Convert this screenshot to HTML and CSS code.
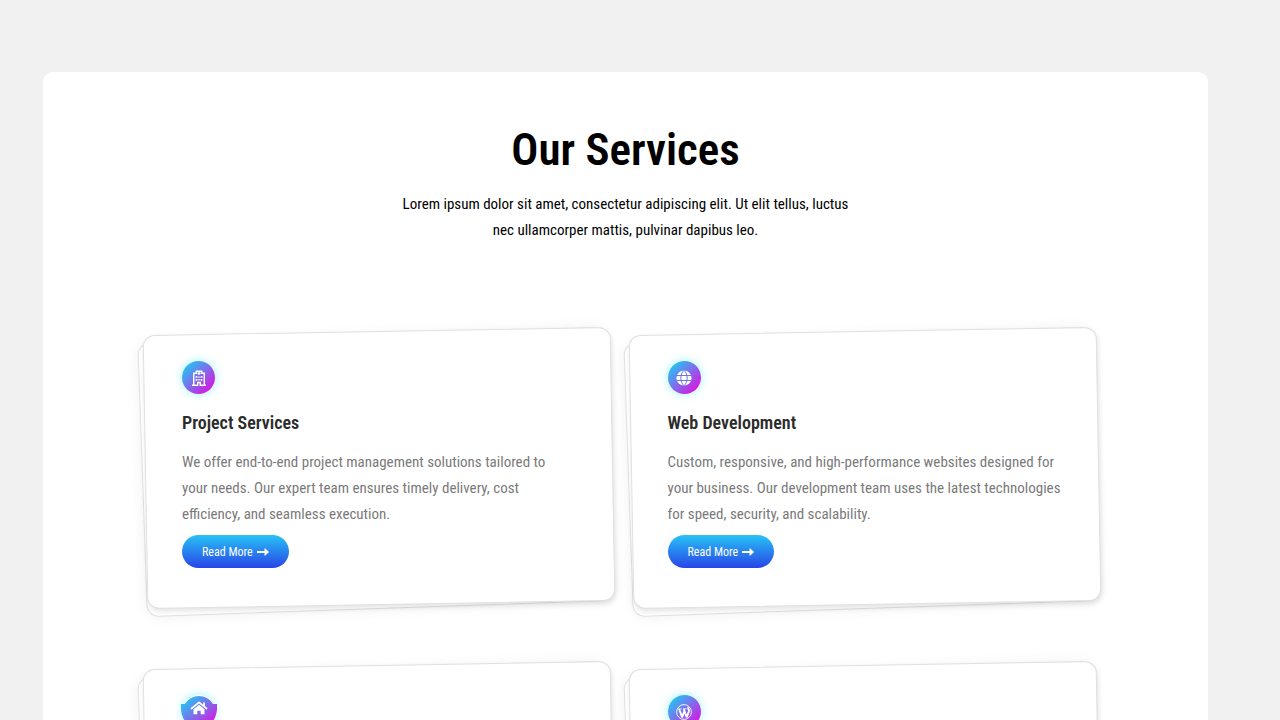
FILE: index.html
```html
<!DOCTYPE html>
<html lang="en">
<head>
  <meta charset="UTF-8">
  <meta name="viewport" content="width=device-width, initial-scale=1.0">
  <title>Our Services</title>
  <link rel="stylesheet" href="styles.css">
</head>
<body>
  <section class="services">
    <header class="section-header">
      <h1>Our Services</h1>
      <p>Lorem ipsum dolor sit amet, consectetur adipiscing elit. Ut elit tellus, luctus<br>nec ullamcorper mattis, pulvinar dapibus leo.</p>
    </header>

    <div class="services-grid">
      <!-- Project Services -->
      <article class="card">
        <div class="card-icon">
          <svg class="icon" viewBox="0 0 16 16" aria-hidden="true">
            <path fill="none" stroke="#fff" stroke-width="1.4" d="M2.7 15V3.3h2.6V1.2h5.4v2.1h2.6V15M1 15.2h5.7v-2.7h2.6v2.7H15"/>
            <path fill="#fff" d="M7.4 1.7h1.2v1h1v1.2h-1v1H7.4v-1h-1V2.7h1zM4.6 6h1.8v1.8H4.6zM9.6 6h1.8v1.8H9.6zM4.6 9h1.8v1.8H4.6zM9.6 9h1.8v1.8H9.6zM7.3 6.6h1.4v1.2H7.3zM7.3 9h1.4v1.6H7.3z"/>
          </svg>
        </div>
        <h2>Project Services</h2>
        <p>We offer end-to-end project management solutions tailored to<br>your needs. Our expert team ensures timely delivery, cost<br>efficiency, and seamless execution.</p>
        <a class="read-more" href="#">Read More
          <svg class="arrow" viewBox="0 0 12 8" aria-hidden="true"><path fill="#fff" d="M0 3h7.5V.8Q7.5 0 8.2.6L11.6 3.5Q12 4 11.6 4.5L8.2 7.4Q7.5 8 7.5 7.2V5H0z"/></svg>
        </a>
      </article>

      <!-- Web Development -->
      <article class="card">
        <div class="card-icon">
          <svg class="icon" viewBox="0 0 16 16" aria-hidden="true">
            <circle cx="8" cy="8" r="7.6" fill="#fff"/>
            <path fill="none" stroke="#6c7ae6" stroke-width="1" d="M.5 5.5h15M.5 10.5h15M8 .4C3.8 3.5 3.8 12.5 8 15.6M8 .4c4.2 3.1 4.2 12.1 0 15.2"/>
          </svg>
        </div>
        <h2>Web Development</h2>
        <p>Custom, responsive, and high-performance websites designed for<br>your business. Our development team uses the latest technologies<br>for speed, security, and scalability.</p>
        <a class="read-more" href="#">Read More
          <svg class="arrow" viewBox="0 0 12 8" aria-hidden="true"><path fill="#fff" d="M0 3h7.5V.8Q7.5 0 8.2.6L11.6 3.5Q12 4 11.6 4.5L8.2 7.4Q7.5 8 7.5 7.2V5H0z"/></svg>
        </a>
      </article>

      <!-- Home -->
      <article class="card">
        <div class="card-icon card-icon-home">
          <svg class="icon-badge" viewBox="0 0 36 33" aria-hidden="true">
            <defs>
              <linearGradient id="badge" x1="0" y1="0" x2="1" y2="1">
                <stop offset="0.1" stop-color="#1fc8f4"/>
                <stop offset="0.9" stop-color="#e010e0"/>
              </linearGradient>
            </defs>
            <path fill="url(#badge)" d="M4 9C10-1.7 26-1.7 32 9h4C37 24 29 33 18 33S-1 24 0 9z"/>
            <path fill="none" stroke="#fff" stroke-width="1.7" stroke-linecap="round" stroke-linejoin="round" d="M10.5 13.5L18 7.4l7.5 6.1M23 8v3"/>
            <path fill="#fff" d="M12.5 14.3L18 9.8l5.5 4.5v5h-3.8v-3.6h-3.4v3.6h-3.8z"/>
          </svg>
        </div>
      </article>

      <!-- WordPress -->
      <article class="card">
        <div class="card-icon">
          <svg class="icon" viewBox="0 0 16 16" aria-hidden="true">
            <circle cx="8" cy="8" r="7.4" fill="none" stroke="#fff" stroke-width="0.9"/>
            <path fill="none" stroke="#fff" stroke-width="0.8" d="M1.8 4.8h3.8M6.9 4.8h3.8"/>
            <path fill="none" stroke="#fff" stroke-width="1.9" stroke-linejoin="bevel" d="M3.1 5l3 8.3L8.4 7M7.7 5l3 8.3 2.2-6.1c.7-2-1.4-2.3-.7-4.1"/>
          </svg>
        </div>
      </article>
    </div>
  </section>
</body>
</html>
```
FILE: styles.css
```css
* {
  box-sizing: border-box;
}

body {
  font-family: 'Saira Extra Condensed', 'Roboto Condensed', 'Liberation Sans Narrow', 'Liberation Sans', sans-serif;
  margin: 0;
  background-color: #f1f1f1;
  color: #000;
  height: 100vh;
  overflow: hidden;
}

h1, h2, p {
  margin: 0;
}

.services {
  margin: 72px 72px 0 43px;
  padding: 48px 110px 60px 102px;
  background-color: #fff;
  border-radius: 10px;
}

.section-header {
  text-align: center;
  padding-left: 8px;
  margin-bottom: 88px;
}

h1 {
  font-size: 45px;
  font-weight: 600;
  line-height: 60px;
  margin-bottom: 11px;
}

.section-header p {
  font-size: 15px;
  line-height: 26px;
}

.services-grid {
  display: grid;
  grid-template-columns: 1fr 1fr;
  column-gap: 18px;
  row-gap: 60px;
}

.card {
  position: relative;
  z-index: 0;
  min-height: 274px;
  padding: 30px 32px 36px 37px;
}

/* Tilted sheets behind the card content */
.card::before,
.card::after {
  content: '';
  position: absolute;
  inset: 0;
  background-color: #fff;
  border: 1px solid #e0e0e0;
  border-radius: 12px;
}

.card::before {
  z-index: -2;
  inset: 4px 3px -4px -3px;
  transform: rotate(-2deg);
  box-shadow: 0 0 14px rgba(0, 0, 0, 0.06);
}

.card::after {
  z-index: -1;
  transform: rotate(-1deg);
  box-shadow: 1px 3px 5px rgba(0, 0, 0, 0.1);
}

.card-icon {
  display: flex;
  align-items: center;
  justify-content: center;
  width: 33px;
  height: 33px;
  border-radius: 50%;
  background: linear-gradient(135deg, #1fc8f4 10%, #e010e0 90%);
  box-shadow: 0 0 10px rgba(0, 225, 255, 0.4);
}

.card-icon-home {
  background: none;
}

.icon {
  width: 16px;
  height: 16px;
}

.icon-badge {
  flex: none;
  width: 36px;
  height: 33px;
}

h2 {
  margin-top: 14px;
  font-size: 18px;
  font-weight: 600;
  line-height: 30px;
  color: #2b2b2b;
}

.card p {
  margin-top: 11px;
  font-size: 15px;
  line-height: 26px;
  color: #7a7a7a;
}

.read-more {
  display: inline-flex;
  align-items: center;
  gap: 4px;
  height: 33px;
  margin-top: 8px;
  padding: 0 20px;
  border-radius: 17px;
  background: linear-gradient(#28c3f5, #2844e8);
  color: #fff;
  font-size: 12px;
  text-decoration: none;
}

.arrow {
  width: 12px;
  height: 8px;
}
```
